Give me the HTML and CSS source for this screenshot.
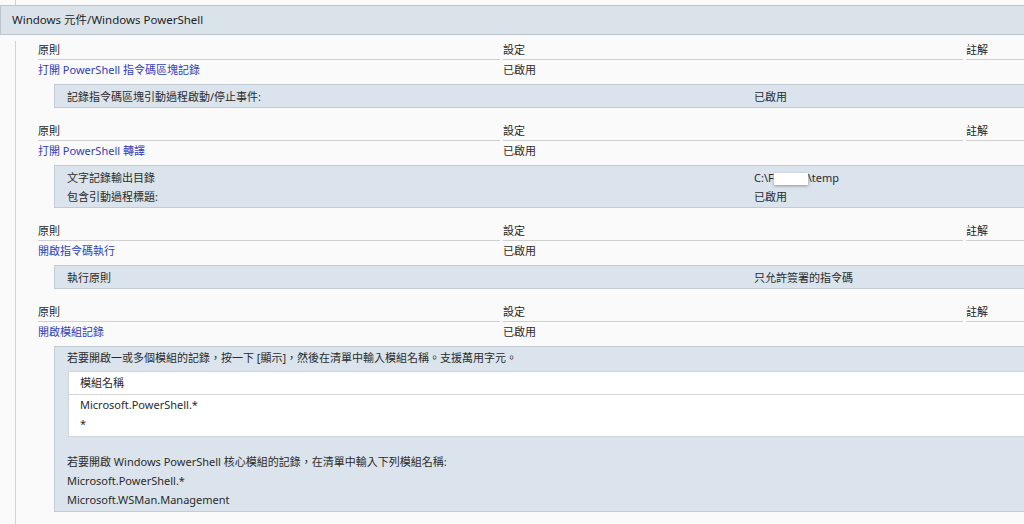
FILE: index.html
```html
<html>
<head>
<meta charset="utf-8">
<title>Windows PowerShell</title>
<link rel="stylesheet" href="styles.css">
</head>
<body>
<div class="lead"></div>
<div class="cat">Windows 元件/Windows PowerShell</div>
<div class="cat-body">

<div class="policy">
	<div class="ph">原則</div><div class="ph">設定</div><div class="ph">註解</div>
	<div class="pr"><a href="#">打開 PowerShell 指令碼區塊記錄</a></div><div class="pr">已啟用</div><div class="pr"></div>
</div>
<div class="detail">
	<div>記錄指令碼區塊引動過程啟動/停止事件:</div><div>已啟用</div>
</div>

<div class="policy">
	<div class="ph">原則</div><div class="ph">設定</div><div class="ph">註解</div>
	<div class="pr"><a href="#">打開 PowerShell 轉譯</a></div><div class="pr">已啟用</div><div class="pr"></div>
</div>
<div class="detail">
	<div>文字記錄輸出目錄</div><div>C:\F<span class="redact"></span>\temp</div>
	<div>包含引動過程標題:</div><div>已啟用</div>
</div>

<div class="policy">
	<div class="ph">原則</div><div class="ph">設定</div><div class="ph">註解</div>
	<div class="pr"><a href="#">開啟指令碼執行</a></div><div class="pr">已啟用</div><div class="pr"></div>
</div>
<div class="detail">
	<div>執行原則</div><div>只允許簽署的指令碼</div>
</div>

<div class="policy">
	<div class="ph">原則</div><div class="ph">設定</div><div class="ph">註解</div>
	<div class="pr"><a href="#">開啟模組記錄</a></div><div class="pr">已啟用</div><div class="pr"></div>
</div>
<div class="detail block">
	<div class="line">若要開啟一或多個模組的記錄，按一下 [顯示]，然後在清單中輸入模組名稱。支援萬用字元。</div>
	<div class="list">
		<div class="lh">模組名稱</div>
		<div class="li">Microsoft.PowerShell.*</div>
		<div class="li">*</div>
	</div>
	<div class="line">若要開啟 Windows PowerShell 核心模組的記錄，在清單中輸入下列模組名稱:</div>
	<div class="line">Microsoft.PowerShell.*</div>
	<div class="line">Microsoft.WSMan.Management</div>
</div>

</div>
</body>
</html>
```

FILE: styles.css
```css
body {
	margin: 0;
	background: #fafafa;
	color: #2b2b2b;
	font-family: "Noto Sans", "Noto Sans CJK TC", sans-serif;
	font-size: 11px;
	overflow: hidden;
}
a {
	color: #3140bd;
	text-decoration: none;
}
.lead {
	height: 5px;
	margin-left: 15px;
	border-left: 1px solid #d2d2d2;
}
.cat {
	height: 28px;
	line-height: 28px;
	padding-left: 11px;
	font-size: 11.5px;
	color: #1e1e1e;
	background: #dbe3ea;
	border: 1px solid #bcc5cc;
	border-right: 0;
}
.cat-body {
	margin-left: 15px;
	padding-bottom: 20px;
	border-left: 1px solid #d2d2d2;
}
.policy {
	display: grid;
	grid-template-columns: 462px 460px 1fr;
	column-gap: 3px;
	padding-left: 22px;
	margin-top: 14px;
}
.policy:first-child {
	margin-top: 6px;
}
.ph {
	height: 18px;
	line-height: 18px;
	border-bottom: 1px solid #d0d0d0;
	color: #1e1e1e;
	white-space: nowrap;
}
.pr {
	line-height: 20px;
	padding-bottom: 4px;
	white-space: nowrap;
}
.detail {
	display: grid;
	grid-template-columns: 687px 1fr;
	margin-left: 38px;
	padding: 2px 0 1px 12px;
	line-height: 19px;
	background: #dbe4ec;
	border: 1px solid #c4ccd3;
	border-right: 0;
	white-space: nowrap;
}
.detail.block {
	display: block;
	padding: 1px 0 2px 12px;
}
.redact {
	display: inline-block;
	width: 34px;
	height: 12px;
	vertical-align: middle;
	background: #fff;
	box-shadow: 0 1px 3px rgba(0,0,0,0.35);
}
.list {
	margin: 4px 0 15px 1px;
	padding-bottom: 3px;
	background: #fff;
	border: 1px solid #cfd5da;
	border-right: 0;
}
.lh {
	height: 22px;
	line-height: 22px;
	padding-left: 11px;
	border-bottom: 1px solid #d6d6d6;
}
.li {
	line-height: 19px;
	padding-left: 11px;
}
```
